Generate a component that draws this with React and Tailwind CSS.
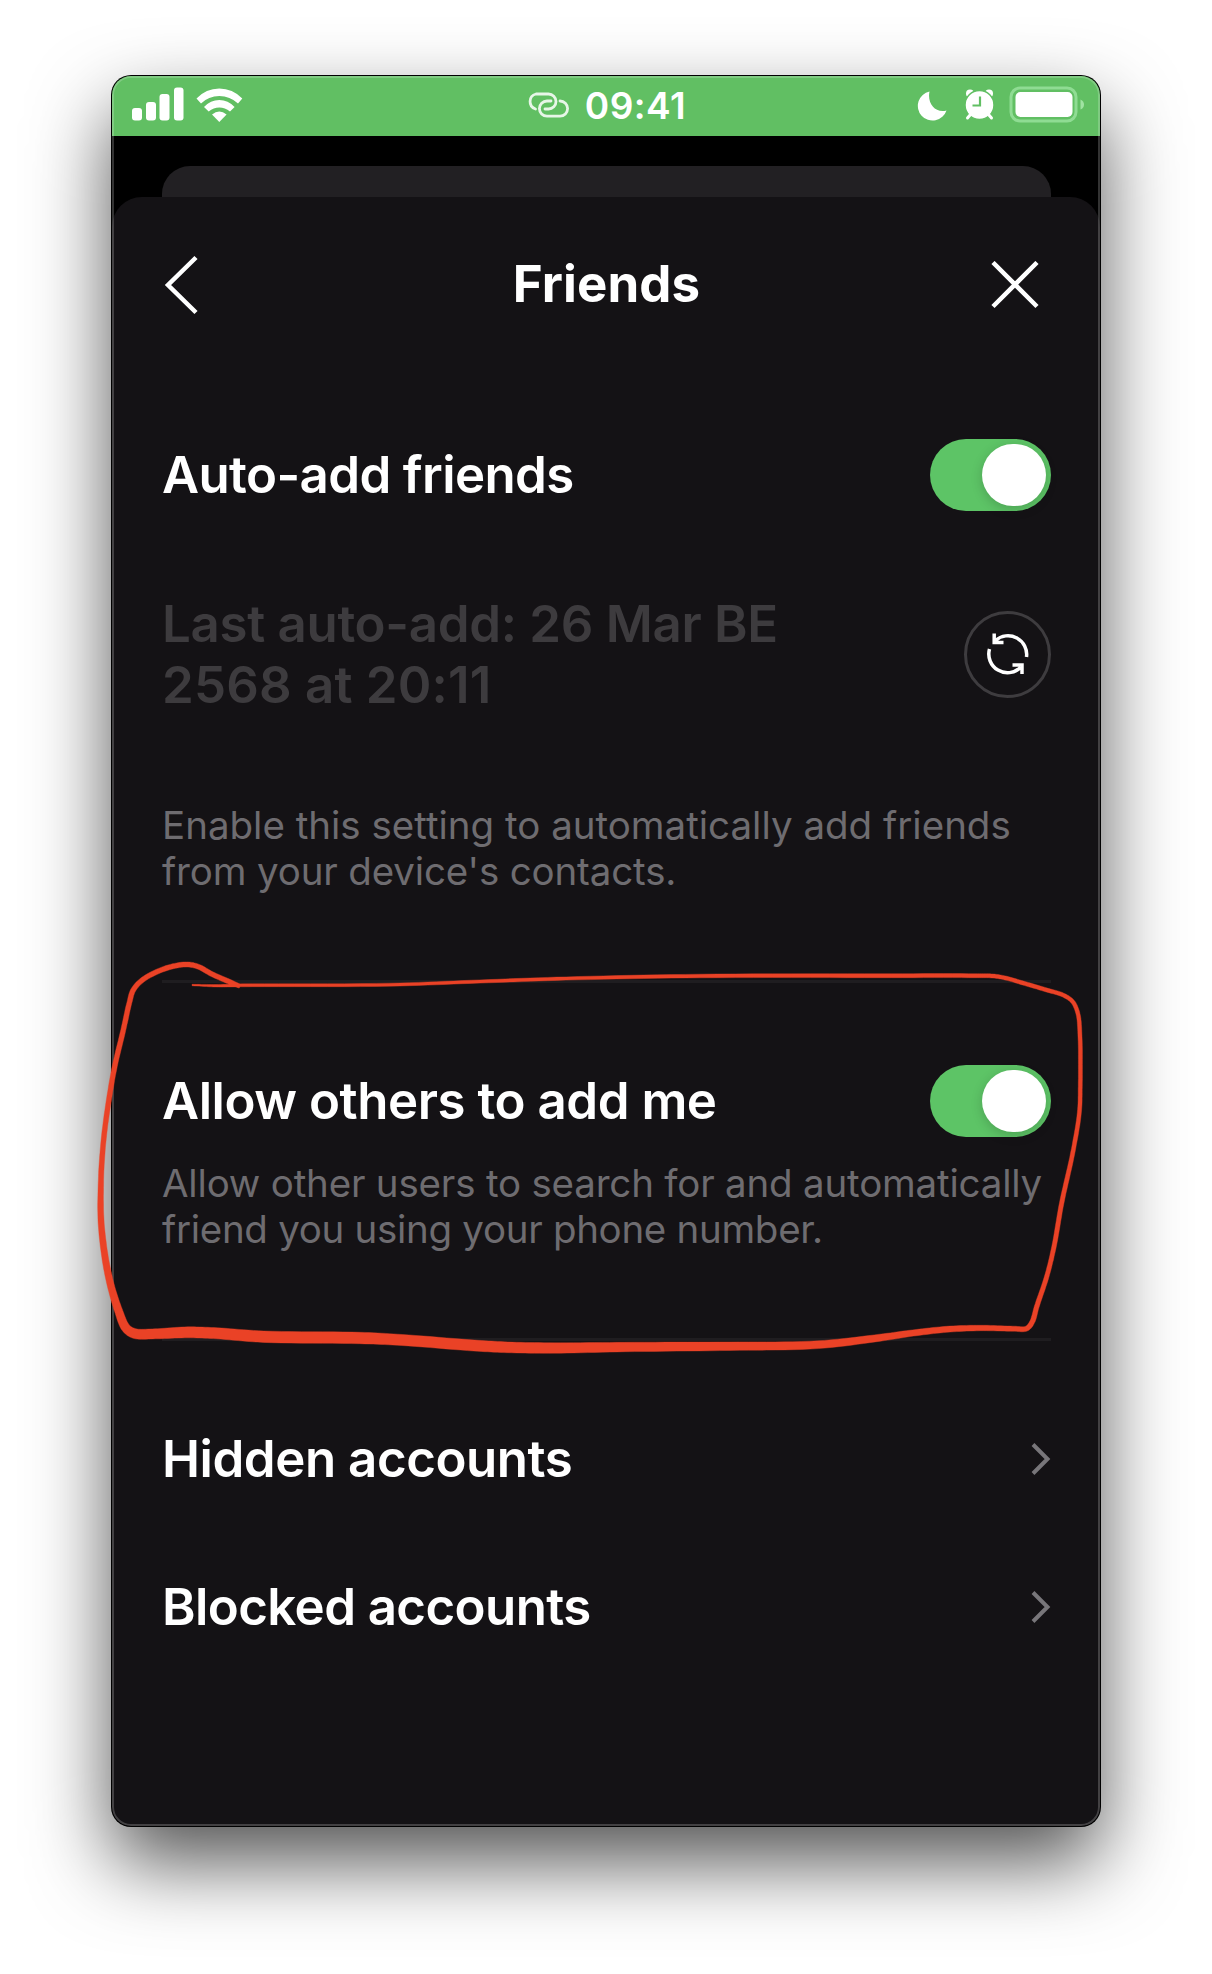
const RED_LINE = [
  [192, 985, 1.5], [216, 985.7, 2.5], [242, 985.3, 3], [390, 984.7, 3], [480, 981.5, 3.2], [566, 978.5, 3.3], [700, 976, 3.6], [880, 975.7, 4],
  [975, 975.7, 4], [993, 976, 4], [1005, 977.9, 4], [1023, 983, 4], [1046.7, 990, 4], [1063, 995, 4], [1072.7, 1001.7, 4],
  [1078, 1014, 4], [1080, 1037, 4], [1080.3, 1083, 4], [1079.3, 1113, 4], [1072.7, 1153, 4.2], [1061.7, 1203, 4.5],
  [1054, 1246.7, 4.5], [1046.7, 1276.7, 4.5], [1036.7, 1306.7, 4.8], [1032.3, 1321.7, 5], [1026.7, 1328.5, 5],
  [1013, 1328.7, 5], [980, 1328, 5.5], [946.7, 1329.3, 6], [913, 1333, 6.3], [880, 1337.7, 7], [818, 1344.7, 7.8],
  [730, 1346.2, 8.5], [625, 1347, 9.5], [554, 1348, 10.5], [507.7, 1347.3, 10.8], [474, 1345.5, 11], [402, 1340, 11],
  [360, 1338, 11.5], [263.6, 1336.7, 11.5], [217, 1333.3, 11], [188, 1332.3, 11], [155, 1333.8, 10], [134.5, 1333.5, 10],
  [126, 1328, 9], [118.3, 1310, 8], [110.7, 1285, 7], [105, 1256.7, 6.5], [101, 1220, 6], [101, 1180, 5.3],
  [102.7, 1150, 5], [106, 1120, 5], [114, 1070, 5], [123.3, 1030, 5], [129.3, 1003, 5], [133.3, 990, 5],
  [143.3, 979.3, 5], [166.7, 968, 5], [186.7, 964.5, 5], [198.3, 966.7, 5], [211.7, 974, 5], [230, 982, 5], [240, 986.3, 4],
];

// Turns [x, y, width] samples into the outline of a stroke of varying width.
function strokeOutline(points) {
  const at = (i) => points[Math.max(0, Math.min(points.length - 1, i))];
  const samples = [];
  for (let i = 0; i < points.length - 1; i++) {
    const [a, b, c, d] = [at(i - 1), at(i), at(i + 1), at(i + 2)];
    const gap = (p, q) => Math.max(Math.sqrt(Math.hypot(p[0] - q[0], p[1] - q[1])), 0.01);
    const [g1, g2, g3] = [gap(a, b), gap(b, c), gap(c, d)];
    const slope = (p, q, r, h1, h2, k) => ((q[k] - p[k]) / h1 - (r[k] - p[k]) / (h1 + h2) + (r[k] - q[k]) / h2) * g2;
    for (let s = 0; s < 10; s++) {
      const t = s / 10;
      const val = (k) => {
        const m1 = i === 0 ? c[k] - b[k] : slope(a, b, c, g1, g2, k);
        const m2 = i === points.length - 2 ? c[k] - b[k] : slope(b, c, d, g2, g3, k);
        return (2 * t ** 3 - 3 * t * t + 1) * b[k] + (t ** 3 - 2 * t * t + t) * m1 + (3 * t * t - 2 * t ** 3) * c[k] + (t ** 3 - t * t) * m2;
      };
      samples.push([val(0), val(1), b[2] + (c[2] - b[2]) * t]);
    }
  }
  samples.push(points[points.length - 1]);
  const left = [];
  const right = [];
  samples.forEach(([x, y, w], i) => {
    const p = samples[Math.max(0, i - 1)];
    const n = samples[Math.min(samples.length - 1, i + 1)];
    const len = Math.hypot(n[0] - p[0], n[1] - p[1]) || 1;
    const nx = (-(n[1] - p[1]) / len) * (w / 2);
    const ny = ((n[0] - p[0]) / len) * (w / 2);
    left.push(`${(x + nx).toFixed(1)} ${(y + ny).toFixed(1)}`);
    right.unshift(`${(x - nx).toFixed(1)} ${(y - ny).toFixed(1)}`);
  });
  return `M${left.join("L")}L${right.join("L")}Z`;
}

function Toggle() {
  return (
    <div className="flex h-[72px] w-[121px] shrink-0 items-center justify-end rounded-full bg-[#5dc466] pr-[5px]">
      <div className="h-[62px] w-[64px] rounded-full bg-white shadow-[0_3px_12px_rgba(0,0,0,0.18)]" />
    </div>
  );
}

function Chevron() {
  return (
    <svg className="h-9 w-6" viewBox="0 0 24 36" fill="none" stroke="#78767a" strokeWidth="4">
      <path d="M6 3.5 20.500 18 6 32.500" />
    </svg>
  );
}

function StatusBar() {
  return (
    <header className="flex h-[60px] items-start justify-between bg-[#61bf63] text-white">
      <svg className="h-[60px] w-[140px]" viewBox="0 0 140 60" fill="white">
        <rect x="20" y="32" width="10" height="12.500" rx="3" />
        <rect x="34" y="26" width="10" height="18.500" rx="3" />
        <rect x="47.500" y="18" width="10" height="26.500" rx="3" />
        <rect x="62" y="11.500" width="9.500" height="33" rx="3" />
        <path d="M84.500 22.500Q94 12.500 107.300 12.500T130.300 22.500L126 27.500Q118 20 107.300 20T89 27.500Z" />
        <path d="M92 31Q98.500 24 107.300 24T122.600 31L118 35.500Q113 31.500 107.300 31.500T96.700 35.500Z" />
        <path d="M100 38.500Q107.300 32.500 114.600 38.500L107.300 46Z" />
      </svg>
      <div className="flex h-[58px] items-center gap-[15px] pl-[55px]">
        <svg className="h-7 w-[44px]" viewBox="0 0 44 28" fill="none" stroke="white" strokeOpacity="0.85" strokeWidth="2.800" strokeLinecap="round">
          <path d="M9.500 18A7.800 7.800 0 0 1 10 3H22.500A7.500 7.500 0 0 1 22.500 18H19" />
          <path d="M34 10A7.500 7.500 0 0 1 34 25.200H21A7.600 7.600 0 0 1 21 10H25" />
        </svg>
        <span className="text-[37px] leading-none font-semibold tracking-[0.500px]">09:41</span>
      </div>
      <svg className="h-[60px] w-[195px]" viewBox="0 0 195 60" fill="white">
        <path d="M24.500 15.500A14.700 14.700 0 1 0 41.500 34.500C30 37.500 22 27 24.500 15.500Z" />
        <circle cx="65" cy="17.500" r="4" />
        <circle cx="84" cy="17.500" r="4" />
        <circle cx="74.500" cy="29" r="14.500" stroke="#61bf63" strokeWidth="1.500" />
        <path d="M65.500 38.500 62.500 42M83.500 38.500 86.500 42" stroke="white" strokeWidth="3" strokeLinecap="round" />
        <path d="M75 20.500V29.500H67.500" fill="none" stroke="#61bf63" strokeWidth="2.200" />
        <rect x="106" y="12" width="65" height="33" rx="9" fill="none" stroke="#8fdc93" strokeWidth="3" />
        <rect x="110.500" y="16" width="57" height="25" rx="5" />
        <path d="M175.500 23.500Q179 25 179 28.500T175.500 33.500Z" fill="#9fe3a2" />
      </svg>
    </header>
  );
}

export default function App() {
  return (
    <div className="relative h-[1974px] w-[1212px] overflow-hidden bg-white pt-[76px] pl-[112px] font-['Inter','Liberation_Sans',sans-serif]">
      <div className="relative flex h-[1750px] w-[988px] flex-col overflow-hidden rounded-[19px] bg-black shadow-[0_0_0_1px_#000,0_36px_80px_rgba(0,0,0,0.68)]">
        <StatusBar />
        <div className="mt-[30px] mr-[49px] ml-[50px] h-[31px] shrink-0 rounded-t-[28px] bg-[#222023]" />
        <main className="flex grow flex-col rounded-t-[30px] bg-[#141215] pr-[49px] pl-[50px] text-white">
          <div className="mt-[52px] flex h-[72px] items-center justify-between">
            <svg className="h-[60px] w-[60px]" viewBox="0 0 60 60" fill="none" stroke="white" strokeWidth="4.500">
              <path d="M34 2.500 6 30 34 57.500" />
            </svg>
            <h1 className="pb-[4px] text-[51px] leading-none font-bold tracking-[0.1px]">Friends</h1>
            <svg className="mr-[12px] h-[48px] w-[48px]" viewBox="0 0 48 48" fill="none" stroke="white" strokeWidth="4.500">
              <path d="M2 1.500 46 45.500M46 1.500 2 45.500" />
            </svg>
          </div>
          <div className="mt-[118px] flex h-[72px] items-center justify-between">
            <h2 className="pb-px text-[51px] leading-none font-semibold tracking-[-0.620px]">Auto-add friends</h2>
            <Toggle />
          </div>
          <div className="mt-[82px] flex h-[122px] items-center justify-between text-[#3d3b3e]">
            <p className="text-[51px] leading-[61.500px] font-semibold">
              <span className="tracking-[-0.300px]">Last auto-add: 26 Mar BE</span>
              <br />
              <span className="tracking-[0.200px]">2568 at 20:11</span>
            </p>
            <div className="flex h-[87px] w-[87px] items-center justify-center rounded-full border-[3px] border-[#3e3c3f]">
              <svg className="h-[44px] w-[44px]" viewBox="0 0 44 44" fill="none" stroke="white" strokeWidth="3.500">
                <path d="M40.500 25A18.700 18.700 0 0 0 9.500 8.500M8.200 1.500V10.500H17.500" />
                <path d="M3.500 17A18.700 18.700 0 0 0 34.500 35.500M36 42V33H26.500" />
              </svg>
            </div>
          </div>
          <p className="mt-[87px] text-[38.500px] leading-[46px] text-[#6e6c70]">
            <span>Enable this setting to automatically add friends</span>
            <br />
            <span className="tracking-[-0.150px]">from your device's contacts.</span>
          </p>
          <div className="mt-[86px] h-[3px] shrink-0 bg-[#1f1d20]" />
          <div className="mt-[82px] flex h-[72px] shrink-0 items-center justify-between">
            <h2 className="pb-px text-[51px] leading-none font-semibold tracking-[-0.460px]">Allow others to add me</h2>
            <Toggle />
          </div>
          <p className="mt-[23px] text-[38.500px] leading-[46px] whitespace-nowrap text-[#6e6c70]">
            <span className="tracking-[-0.190px]">Allow other users to search for and automatically</span>
            <br />
            <span className="tracking-[-0.300px]">friend you using your phone number.</span>
          </p>
          <div className="mt-[86px] h-[3px] shrink-0 bg-[#1f1d20]" />
          <div className="mt-[44px] flex h-[148px] shrink-0 items-center justify-between">
            <h2 className="pb-px text-[51px] leading-none font-semibold tracking-[-0.450px]">Hidden accounts</h2>
            <Chevron />
          </div>
          <div className="flex h-[148px] shrink-0 items-center justify-between">
            <h2 className="pb-px text-[51px] leading-none font-semibold tracking-[-0.600px]">Blocked accounts</h2>
            <Chevron />
          </div>
        </main>
        <div className="pointer-events-none absolute inset-0 rounded-[19px] border-2 border-white/20" />
      </div>
      <svg className="pointer-events-none absolute inset-0 h-[1974px] w-[1212px]" viewBox="0 0 1212 1974">
        <path d={strokeOutline(RED_LINE)} fill="#ea4226" stroke="#ea4226" strokeWidth="0.4" strokeLinejoin="round" />
      </svg>
    </div>
  );
}
